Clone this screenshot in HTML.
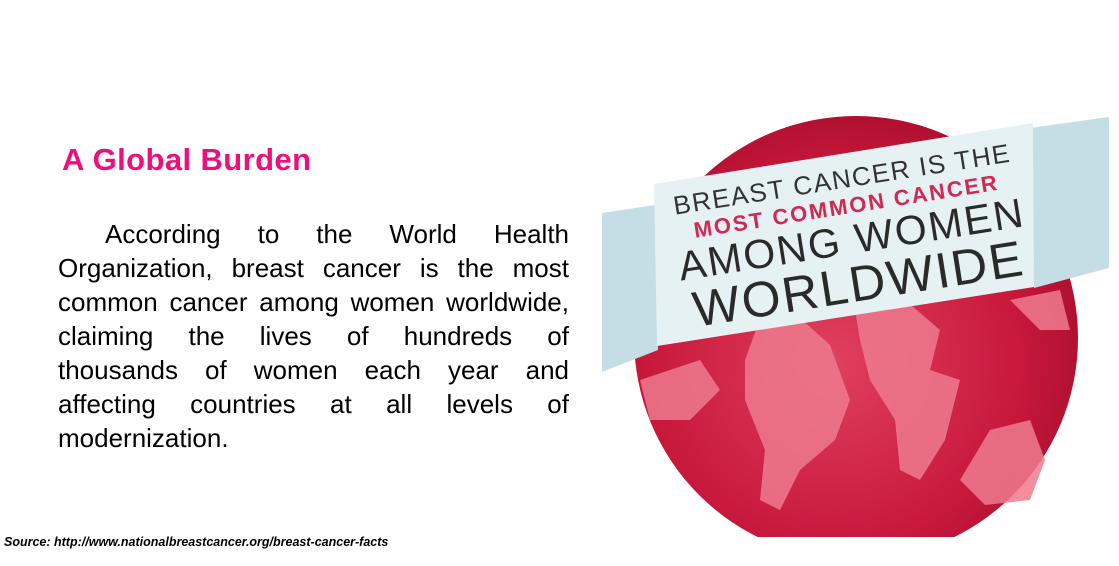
<!DOCTYPE html>
<html><head><meta charset="utf-8"><style>
html,body{margin:0;padding:0;background:#fff;width:1119px;height:566px;overflow:hidden;position:relative;font-family:"Liberation Sans",Arial,sans-serif}
h1{position:absolute;left:62px;top:142px;margin:0;font-size:31px;font-weight:bold;color:#ec0f7d;letter-spacing:0.4px}
.p{position:absolute;left:58px;top:217px;width:511px;margin:0;font-size:26px;line-height:34px;color:#000}
.p div{text-align:justify;text-align-last:justify;white-space:nowrap}
.p div.l{text-align-last:left}
.src{position:absolute;left:4px;top:535px;font-size:12.5px;font-weight:bold;font-style:italic;color:#000}
svg{position:absolute;left:0;top:0}
</style></head><body>
<h1>A Global Burden</h1>
<div class="p">
<div style="padding-left:47px">According to the World Health</div>
<div>Organization, breast cancer is the most</div>
<div>common cancer among women worldwide,</div>
<div>claiming the lives of hundreds of</div>
<div>thousands of women each year and</div>
<div>affecting countries at all levels of</div>
<div class="l">modernization.</div>
</div>
<div class="src">Source: http://www.nationalbreastcancer.org/breast-cancer-facts</div>
<svg width="1119" height="566" viewBox="0 0 1119 566">
<defs>
<radialGradient id="g" cx="0.45" cy="0.55" r="0.6">
<stop offset="0" stop-color="#e0405e"/><stop offset="0.7" stop-color="#c8183c"/><stop offset="1" stop-color="#a90e2c"/>
</radialGradient>
<clipPath id="c"><rect x="600" y="0" width="519" height="537"/></clipPath>
</defs>
<g clip-path="url(#c)">
<circle cx="856" cy="338" r="222" fill="url(#g)"/>
<g fill="#ee7b8e" opacity="0.85">
<path d="M756 330 L800 318 L830 345 L850 400 L835 440 L800 470 L780 510 L760 500 L765 450 L745 400 L745 360 Z"/>
<path d="M855 310 L905 300 L940 330 L930 370 L960 380 L945 440 L920 480 L900 470 L895 420 L870 380 L860 340 Z"/>
<path d="M990 430 L1030 420 L1045 460 L1030 500 L985 505 L960 480 Z"/>
<path d="M1010 300 L1060 290 L1070 330 L1040 330 Z"/>
<path d="M640 380 L700 360 L720 390 L690 420 L650 420 Z"/>
</g>
<polygon points="602,213 655,205 658,350 602,372" fill="#c5dde4"/>
<polygon points="1030,128 1109,117 1109,268 1034,288" fill="#c5dde4"/>
<polygon points="654,184 1033,123 1034,287 657,346" fill="#e6f1f4"/>
<g transform="translate(-8,-10) rotate(-9 855 240)" font-family="'Liberation Sans',Arial,sans-serif" text-anchor="middle">
<text x="858" y="198" font-size="26" fill="#333" letter-spacing="1.5">BREAST CANCER IS THE</text>
<text x="858" y="224" font-size="22" font-weight="bold" fill="#d02a54" letter-spacing="2">MOST COMMON CANCER</text>
<text x="858" y="264" font-size="41" fill="#2a2a2a" letter-spacing="2">AMONG WOMEN</text>
<text x="858" y="312" font-size="50" fill="#2a2a2a" letter-spacing="2">WORLDWIDE</text>
</g>
</g>
</svg>
</body></html>
